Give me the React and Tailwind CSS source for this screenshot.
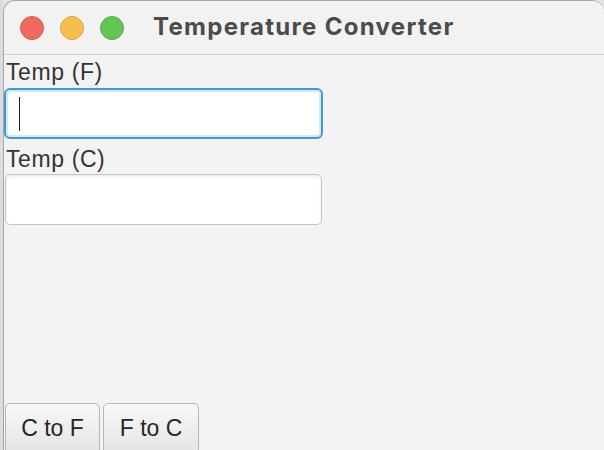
export default function App() {
    const ui = { fontFamily: '"Liberation Sans", Arial, sans-serif' };

    return (
        <div className="w-[604px] h-[450px] overflow-hidden flex bg-[#e4e4e4]" style={ui}>
            <div className="w-[3px] shrink-0 bg-[#dcdcdc]" />
            <div className="flex-1 h-[456px] flex flex-col bg-[#f3f3f3] border-l border-t border-[#a6a6a6] rounded-tl-[12px] rounded-tr-[12px]">
                {/* title bar */}
                <div className="h-[54px] shrink-0 flex items-center border-b border-[#cdcdcd] bg-[#f2f2f2] rounded-tl-[12px] rounded-tr-[12px]">
                    <div className="flex gap-4 ml-4">
                        <span className="w-6 h-6 rounded-full bg-[#ee6a5f] border border-[#d9574d]" />
                        <span className="w-6 h-6 rounded-full bg-[#f5bf4f] border border-[#dea63a]" />
                        <span className="w-6 h-6 rounded-full bg-[#61c554] border border-[#4fae43]" />
                    </div>
                    <h1
                        className="ml-[29px] mb-[2px] text-[24px] tracking-[1.3px] font-bold text-[#4b4b4b]"
                        style={{ fontFamily: 'Inter, "Liberation Sans", sans-serif' }}
                    >
                        Temperature Converter
                    </h1>
                </div>

                {/* form */}
                <div className="flex flex-col pt-[4px]">
                    <label className="pl-[2px] text-[23px] tracking-[0.6px] leading-[26px] text-[#333]">Temp (F)</label>
                    <div className="mt-[3px] w-[319px] h-[51px] flex items-center rounded-[6px] border-2 border-[#3f9bd7] bg-white shadow-[inset_0_0_0_2px_#d5eaf8]">
                        <span className="ml-[13px] w-px h-[34px] bg-[#222]" />
                    </div>
                    <label className="mt-[7px] pl-[2px] text-[23px] tracking-[0.6px] leading-[26px] text-[#333]">Temp (C)</label>
                    <div className="mt-[2px] ml-px w-[317px] h-[51px] rounded-[5px] border border-[#c4c4c4] bg-white shadow-[inset_0_2px_3px_rgba(0,0,0,0.07)]" />
                </div>

                <div className="flex-1" />

                {/* buttons */}
                <div className="flex gap-[3px] ml-px">
                    <button className="w-[95px] h-[53px] rounded-[5px] border border-[#b6b6b6] bg-linear-to-b from-[#f8f8f8] to-[#e4e4e4] text-[23px] leading-[26px] text-[#262626] pb-[4px]">
                        C to F
                    </button>
                    <button className="w-[96px] h-[53px] rounded-[5px] border border-[#b6b6b6] bg-linear-to-b from-[#f8f8f8] to-[#e4e4e4] text-[23px] leading-[26px] text-[#262626] pb-[4px]">
                        F to C
                    </button>
                </div>
            </div>
        </div>
    );
}
